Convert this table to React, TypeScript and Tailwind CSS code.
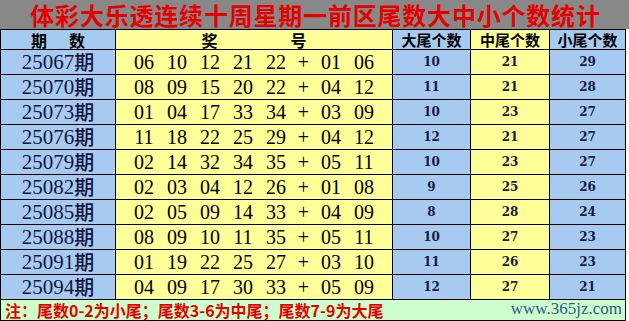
import React from 'react';

const rows: { id: string; front: string[]; back: string[]; big: string; mid: string; small: string }[] = [
  { id: '25067', front: ['06', '10', '12', '21', '22'], back: ['01', '06'], big: '10', mid: '21', small: '29' },
  { id: '25070', front: ['08', '09', '15', '20', '22'], back: ['04', '12'], big: '11', mid: '21', small: '28' },
  { id: '25073', front: ['01', '04', '17', '33', '34'], back: ['03', '09'], big: '10', mid: '23', small: '27' },
  { id: '25076', front: ['11', '18', '22', '25', '29'], back: ['04', '12'], big: '12', mid: '21', small: '27' },
  { id: '25079', front: ['02', '14', '32', '34', '35'], back: ['05', '11'], big: '10', mid: '23', small: '27' },
  { id: '25082', front: ['02', '03', '04', '12', '26'], back: ['01', '08'], big: '9', mid: '25', small: '26' },
  { id: '25085', front: ['02', '05', '09', '14', '33'], back: ['04', '09'], big: '8', mid: '28', small: '24' },
  { id: '25088', front: ['08', '09', '10', '11', '35'], back: ['05', '11'], big: '10', mid: '27', small: '23' },
  { id: '25091', front: ['01', '19', '22', '25', '27'], back: ['03', '10'], big: '11', mid: '26', small: '23' },
  { id: '25094', front: ['04', '09', '17', '30', '33'], back: ['05', '09'], big: '12', mid: '27', small: '21' },
];

const cjk = "font-['Noto_Sans_CJK_SC',sans-serif]";
const serif = "font-['Liberation_Serif','Noto_Sans_CJK_SC',serif]";
const stat = "font-['DejaVu_Serif',serif] text-[12px] font-bold text-[#1a1a40]";

export default function App() {
  return (
    <div className="w-[629px] h-[321px] bg-white overflow-hidden">
      {/* Title */}
      <div className={`h-[29px] bg-[#888888] flex items-center justify-center overflow-hidden ${cjk}`}>
        <h1 className="text-[24px] leading-[24px] font-bold text-[#e60000] tracking-[0.8px] pl-[2px]">
          体彩大乐透连续十周星期一前区尾数大中小个数统计
        </h1>
      </div>

      <div className="w-[626px] border-l border-t border-black">
        {/* Header */}
        <div className={`flex h-[20px] border-b border-black text-[16px] font-bold text-black leading-none ${cjk}`}>
          <div className="w-[115px] border-r border-black bg-[#a6caf0] flex items-center justify-center gap-[22px]">
            <span>期</span>
            <span>数</span>
          </div>
          <div className="w-[277px] border-r border-black bg-[#ffff99] flex items-center justify-center gap-[73px]">
            <span>奖</span>
            <span>号</span>
          </div>
          <div className="w-[78px] border-r border-black bg-[#a6caf0] flex items-center justify-center text-[15px]">大尾个数</div>
          <div className="w-[79px] border-r border-black bg-[#ffff99] flex items-center justify-center text-[15px]">中尾个数</div>
          <div className="w-[76px] border-r border-black bg-[#a6caf0] flex items-center justify-center text-[15px]">小尾个数</div>
        </div>

        {/* Rows */}
        {rows.map((r) => (
          <div key={r.id} className="flex h-[25px] border-b border-black leading-none">
            <div className={`w-[115px] border-r border-black bg-[#a6caf0] flex items-center justify-center text-[21px] text-[#15153f] ${serif}`}>
              {r.id}
              <span className={`${cjk} text-[20px] font-medium`}>期</span>
            </div>
            <div className={`w-[277px] border-r border-black bg-[#ffff99] flex items-center justify-center text-[20px] text-black ${serif}`}>
              {r.front.map((n, i) => (
                <span key={i} className="w-[33px] text-center">{n}</span>
              ))}
              <span className="w-[22px] text-center">+</span>
              {r.back.map((n, i) => (
                <span key={i} className="w-[33px] text-center">{n}</span>
              ))}
            </div>
            <div className={`w-[78px] border-r border-black bg-[#a6caf0] flex items-center justify-center ${stat}`}>{r.big}</div>
            <div className={`w-[79px] border-r border-black bg-[#ffff99] flex items-center justify-center ${stat}`}>{r.mid}</div>
            <div className={`w-[76px] border-r border-black bg-[#a6caf0] flex items-center justify-center ${stat}`}>{r.small}</div>
          </div>
        ))}

        {/* Footer */}
        <div className="flex h-[21px] border-b border-r border-black bg-[#ccffcc] items-center justify-between pl-[4px] pr-[3px]">
          <span className={`text-[16px] font-bold text-[#e60000] leading-none ${cjk}`}>
            注：尾数0-2为小尾；尾数3-6为中尾；尾数7-9为大尾
          </span>
          <span className={`text-[17px] text-[#34588a] leading-none -mt-[4px] ${serif}`}>www.365jz.com</span>
        </div>
      </div>
    </div>
  );
}
